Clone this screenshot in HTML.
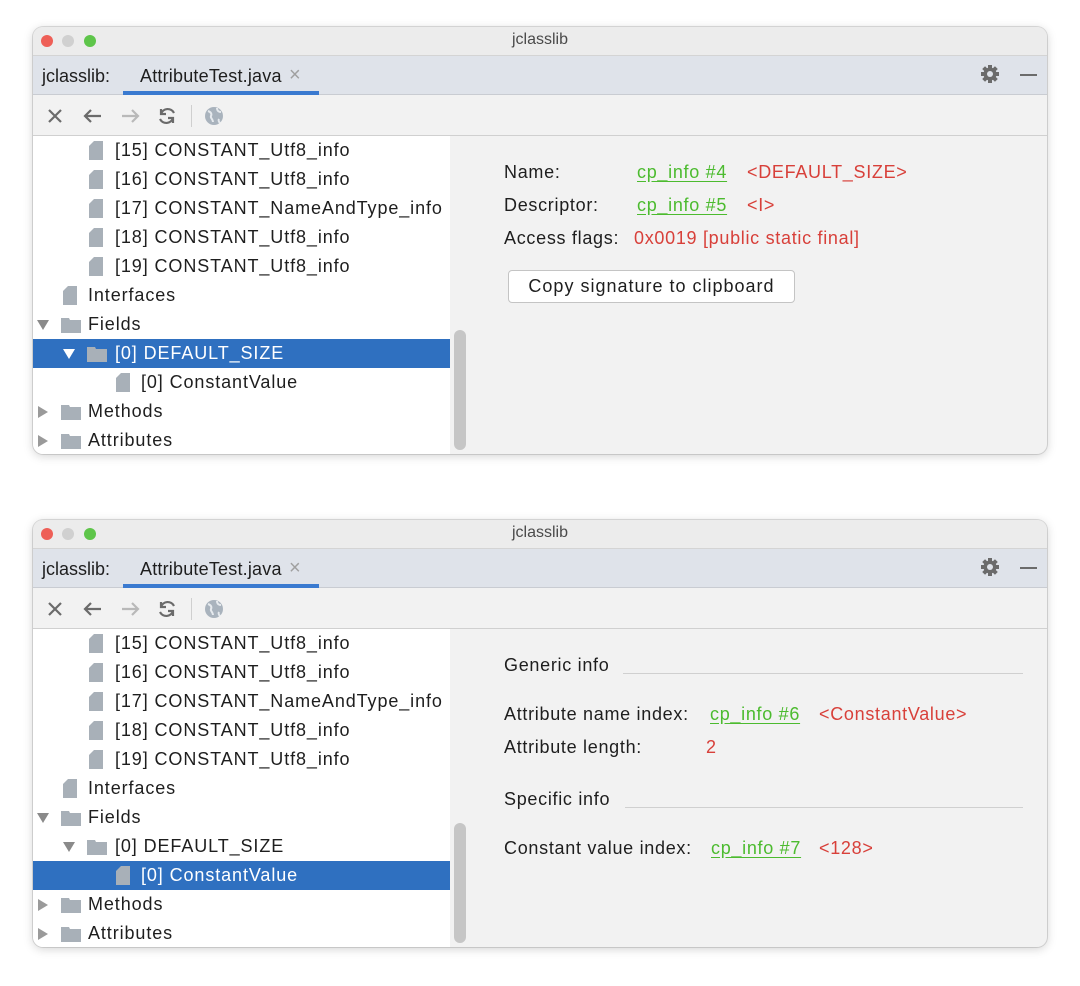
<!DOCTYPE html>
<html><head><meta charset="utf-8">
<style>
*{margin:0;padding:0;box-sizing:border-box}
body{width:1080px;height:986px;background:#fff;position:relative;overflow:hidden;font-family:"Liberation Sans",sans-serif;color:#1e1e1e}
.win{position:absolute;left:33px;width:1014px;height:427px;border-radius:10px;overflow:hidden;background:#f2f2f2;box-shadow:0 2px 10px rgba(0,0,0,.18),0 0 0 1px rgba(0,0,0,.12)}
.a{position:absolute}
.title{left:0;top:0;width:1014px;height:29px;background:#ececec;border-bottom:1px solid #d4d4d4}
.tl{width:12px;height:12px;border-radius:50%;top:8px}
.tabs{left:0;top:29px;width:1014px;height:39px;background:#dfe3ea;border-bottom:1px solid #c9ccd2}
.tool{left:0;top:68px;width:1014px;height:41px;background:#f2f2f2;border-bottom:1px solid #d0d0d0}
.left{left:0;top:109px;width:417px;height:318px;background:#fff}
.t{font-size:18px;line-height:29px;white-space:nowrap}
.row{position:absolute;left:0;width:417px;height:29px}
.row span{letter-spacing:0.9px}
.sel{background:#2f70c0;color:#fff}
.file{position:absolute;width:14px;height:19px;top:5px;background:#a8b0b8;clip-path:polygon(5px 0,14px 0,14px 19px,0 19px,0 5px)}
.fold{position:absolute;width:20px;height:15px;top:8px;background:#a8b0b8;clip-path:polygon(0 0,8px 0,9px 2px,20px 2px,20px 15px,0 15px)}
.tri{position:absolute;top:10px;width:0;height:0;border-left:6px solid transparent;border-right:6px solid transparent;border-top:10px solid #8a8a8a}
.trr{position:absolute;top:9px;width:0;height:0;border-top:6px solid transparent;border-bottom:6px solid transparent;border-left:10px solid #9a9a9a}
.g{color:#4cbb2f;text-decoration:underline;text-underline-offset:3px}
.r{color:#d8403a}
.lab{font-size:18px;position:absolute;line-height:22px;white-space:nowrap;letter-spacing:0.7px}
.scroll{left:421px;width:12px;background:#c6c6c6;border-radius:6px}
</style></head><body>

<!-- Window 1 -->
<div class="win" style="top:27px">
 <div class="a title"></div>
 <div class="a tl" style="left:8px;background:#ee5f57"></div>
 <div class="a tl" style="left:29px;background:#d0d0d0"></div>
 <div class="a tl" style="left:51px;background:#5ec54a"></div>
 <div class="a" style="left:0;width:1014px;top:4px;text-align:center;font-size:16px;color:#4a4a4a">jclasslib</div>
 <div class="a tabs"></div>
 <div class="a t" style="left:9px;top:35px">jclasslib:</div>
 <div class="a t" style="left:107px;top:35px;letter-spacing:0.2px">AttributeTest.java</div>
 <div class="a" style="left:256px;top:37px;font-size:20px;color:#a0a0a0">×</div>
 <div class="a" style="left:90px;top:64px;width:196px;height:4px;background:#3a7ad0"></div>
 <svg class="a" style="left:947px;top:37px" width="20" height="20" viewBox="0 0 20 20"><g fill="#6b6b6b"><circle cx="10" cy="10" r="6.5"/><rect x="8" y="1" width="4" height="18"/><rect x="1" y="8" width="18" height="4"/><rect x="8" y="1" width="4" height="18" transform="rotate(45 10 10)"/><rect x="8" y="1" width="4" height="18" transform="rotate(-45 10 10)"/></g><circle cx="10" cy="10" r="3" fill="#dfe3ea"/></svg>
 <div class="a" style="left:987px;top:47px;width:17px;height:2px;background:#6b6b6b"></div>
 <div class="a tool"></div>
 <svg class="a" style="left:12px;top:78px" width="190" height="22" viewBox="0 0 190 22">
  <path d="M4 5L16 17M16 5L4 17" stroke="#6b6b6b" stroke-width="2.2"/>
  <path d="M40 11H56M46 5L40 11L46 17" stroke="#6b6b6b" stroke-width="2.2" fill="none"/>
  <path d="M77 11H93M87 5L93 11L87 17" stroke="#b9b9b9" stroke-width="2.2" fill="none"/>
  <path d="M129 8A7 7 0 0 0 116 9M116 4V9H121M115 14A7 7 0 0 0 128 13M128 18V13H123" stroke="#6b6b6b" stroke-width="2.2" fill="none"/>
  <rect x="146" y="0" width="1" height="22" fill="#cfcfcf"/>
  <circle cx="169" cy="11" r="9" fill="#a9b3bd"/><path d="M163 6c3 1 4 3 3 5s2 3 2 6M172 3c0 3 2 4 4 4M174 14c-1 2 0 3 1 4" stroke="#e6eaee" stroke-width="2" fill="none"/>
 </svg>
 <div class="a left"></div>
 <div class="a" style="left:0;top:109px">
  <div class="row t" style="top:0"><div class="file" style="left:56px"></div><span class="a" style="left:82px">[15] CONSTANT_Utf8_info</span></div>
  <div class="row t" style="top:29px"><div class="file" style="left:56px"></div><span class="a" style="left:82px">[16] CONSTANT_Utf8_info</span></div>
  <div class="row t" style="top:58px"><div class="file" style="left:56px"></div><span class="a" style="left:82px">[17] CONSTANT_NameAndType_info</span></div>
  <div class="row t" style="top:87px"><div class="file" style="left:56px"></div><span class="a" style="left:82px">[18] CONSTANT_Utf8_info</span></div>
  <div class="row t" style="top:116px"><div class="file" style="left:56px"></div><span class="a" style="left:82px">[19] CONSTANT_Utf8_info</span></div>
  <div class="row t" style="top:145px"><div class="file" style="left:30px"></div><span class="a" style="left:55px">Interfaces</span></div>
  <div class="row t" style="top:174px"><div class="tri" style="left:4px"></div><div class="fold" style="left:28px"></div><span class="a" style="left:55px">Fields</span></div>
  <div class="row t sel" style="top:203px"><div class="tri" style="left:30px;border-top-color:#fff"></div><div class="fold" style="left:54px"></div><span class="a" style="left:82px">[0] DEFAULT_SIZE</span></div>
  <div class="row t" style="top:232px"><div class="file" style="left:83px"></div><span class="a" style="left:108px">[0] ConstantValue</span></div>
  <div class="row t" style="top:261px"><div class="trr" style="left:5px"></div><div class="fold" style="left:28px"></div><span class="a" style="left:55px">Methods</span></div>
  <div class="row t" style="top:290px"><div class="trr" style="left:5px"></div><div class="fold" style="left:28px"></div><span class="a" style="left:55px">Attributes</span></div>
 </div>
 <div class="a scroll" style="top:303px;height:120px"></div>
 <div class="lab" style="left:471px;top:134px">Name:</div>
 <div class="lab g" style="left:604px;top:134px">cp_info #4</div>
 <div class="lab r" style="left:714px;top:134px">&lt;DEFAULT_SIZE&gt;</div>
 <div class="lab" style="left:471px;top:167px">Descriptor:</div>
 <div class="lab g" style="left:604px;top:167px">cp_info #5</div>
 <div class="lab r" style="left:714px;top:167px">&lt;I&gt;</div>
 <div class="lab" style="left:471px;top:200px">Access flags:</div>
 <div class="lab r" style="left:601px;top:200px">0x0019 [public static final]</div>
 <div class="a" style="left:475px;top:243px;width:287px;height:33px;background:#fff;border:1px solid #c4c4c4;border-radius:4px;font-size:18px;line-height:31px;text-align:center;letter-spacing:1px">Copy signature to clipboard</div>
</div>

<!-- Window 2 -->
<div class="win" style="top:520px">
 <div class="a title"></div>
 <div class="a tl" style="left:8px;background:#ee5f57"></div>
 <div class="a tl" style="left:29px;background:#d0d0d0"></div>
 <div class="a tl" style="left:51px;background:#5ec54a"></div>
 <div class="a" style="left:0;width:1014px;top:4px;text-align:center;font-size:16px;color:#4a4a4a">jclasslib</div>
 <div class="a tabs"></div>
 <div class="a t" style="left:9px;top:35px">jclasslib:</div>
 <div class="a t" style="left:107px;top:35px;letter-spacing:0.2px">AttributeTest.java</div>
 <div class="a" style="left:256px;top:37px;font-size:20px;color:#a0a0a0">×</div>
 <div class="a" style="left:90px;top:64px;width:196px;height:4px;background:#3a7ad0"></div>
 <svg class="a" style="left:947px;top:37px" width="20" height="20" viewBox="0 0 20 20"><g fill="#6b6b6b"><circle cx="10" cy="10" r="6.5"/><rect x="8" y="1" width="4" height="18"/><rect x="1" y="8" width="18" height="4"/><rect x="8" y="1" width="4" height="18" transform="rotate(45 10 10)"/><rect x="8" y="1" width="4" height="18" transform="rotate(-45 10 10)"/></g><circle cx="10" cy="10" r="3" fill="#dfe3ea"/></svg>
 <div class="a" style="left:987px;top:47px;width:17px;height:2px;background:#6b6b6b"></div>
 <div class="a tool"></div>
 <svg class="a" style="left:12px;top:78px" width="190" height="22" viewBox="0 0 190 22">
  <path d="M4 5L16 17M16 5L4 17" stroke="#6b6b6b" stroke-width="2.2"/>
  <path d="M40 11H56M46 5L40 11L46 17" stroke="#6b6b6b" stroke-width="2.2" fill="none"/>
  <path d="M77 11H93M87 5L93 11L87 17" stroke="#b9b9b9" stroke-width="2.2" fill="none"/>
  <path d="M129 8A7 7 0 0 0 116 9M116 4V9H121M115 14A7 7 0 0 0 128 13M128 18V13H123" stroke="#6b6b6b" stroke-width="2.2" fill="none"/>
  <rect x="146" y="0" width="1" height="22" fill="#cfcfcf"/>
  <circle cx="169" cy="11" r="9" fill="#a9b3bd"/><path d="M163 6c3 1 4 3 3 5s2 3 2 6M172 3c0 3 2 4 4 4M174 14c-1 2 0 3 1 4" stroke="#e6eaee" stroke-width="2" fill="none"/>
 </svg>
 <div class="a left"></div>
 <div class="a" style="left:0;top:109px">
  <div class="row t" style="top:0"><div class="file" style="left:56px"></div><span class="a" style="left:82px">[15] CONSTANT_Utf8_info</span></div>
  <div class="row t" style="top:29px"><div class="file" style="left:56px"></div><span class="a" style="left:82px">[16] CONSTANT_Utf8_info</span></div>
  <div class="row t" style="top:58px"><div class="file" style="left:56px"></div><span class="a" style="left:82px">[17] CONSTANT_NameAndType_info</span></div>
  <div class="row t" style="top:87px"><div class="file" style="left:56px"></div><span class="a" style="left:82px">[18] CONSTANT_Utf8_info</span></div>
  <div class="row t" style="top:116px"><div class="file" style="left:56px"></div><span class="a" style="left:82px">[19] CONSTANT_Utf8_info</span></div>
  <div class="row t" style="top:145px"><div class="file" style="left:30px"></div><span class="a" style="left:55px">Interfaces</span></div>
  <div class="row t" style="top:174px"><div class="tri" style="left:4px"></div><div class="fold" style="left:28px"></div><span class="a" style="left:55px">Fields</span></div>
  <div class="row t" style="top:203px"><div class="tri" style="left:30px"></div><div class="fold" style="left:54px"></div><span class="a" style="left:82px">[0] DEFAULT_SIZE</span></div>
  <div class="row t sel" style="top:232px"><div class="file" style="left:83px"></div><span class="a" style="left:108px">[0] ConstantValue</span></div>
  <div class="row t" style="top:261px"><div class="trr" style="left:5px"></div><div class="fold" style="left:28px"></div><span class="a" style="left:55px">Methods</span></div>
  <div class="row t" style="top:290px"><div class="trr" style="left:5px"></div><div class="fold" style="left:28px"></div><span class="a" style="left:55px">Attributes</span></div>
 </div>
 <div class="a scroll" style="top:303px;height:120px"></div>
 <div class="lab" style="left:471px;top:134px">Generic info</div>
 <div class="a" style="left:590px;top:153px;width:400px;height:1px;background:#d0d0d0"></div>
 <div class="lab" style="left:471px;top:183px">Attribute name index:</div>
 <div class="lab g" style="left:677px;top:183px">cp_info #6</div>
 <div class="lab r" style="left:786px;top:183px">&lt;ConstantValue&gt;</div>
 <div class="lab" style="left:471px;top:216px">Attribute length:</div>
 <div class="lab r" style="left:673px;top:216px">2</div>
 <div class="lab" style="left:471px;top:268px">Specific info</div>
 <div class="a" style="left:592px;top:287px;width:398px;height:1px;background:#d0d0d0"></div>
 <div class="lab" style="left:471px;top:317px">Constant value index:</div>
 <div class="lab g" style="left:678px;top:317px">cp_info #7</div>
 <div class="lab r" style="left:786px;top:317px">&lt;128&gt;</div>
</div>
</body></html>
